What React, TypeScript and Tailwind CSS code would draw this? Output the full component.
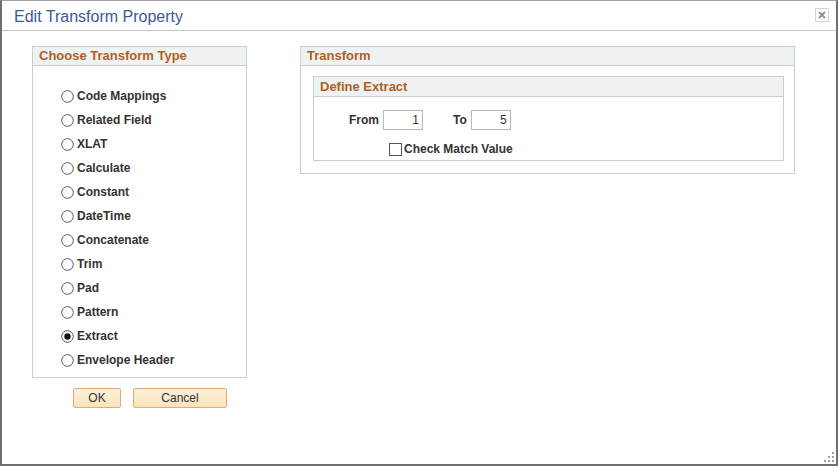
import {useState} from "react";

const types = [
  "Code Mappings",
  "Related Field",
  "XLAT",
  "Calculate",
  "Constant",
  "DateTime",
  "Concatenate",
  "Trim",
  "Pad",
  "Pattern",
  "Extract",
  "Envelope Header",
]

const Radio = ({checked}: {checked: boolean}) => {
  return (
    <svg width="13" height="13" viewBox="0 0 13 13" className="shrink-0">
      <circle cx="6.5" cy="6.5" r="5.8" fill="#fff" stroke="#555" strokeWidth="1"/>
      {checked && <circle cx="6.5" cy="6.5" r="3.2" fill="#111"/>}
    </svg>
  )
}

const App = () => {
  const [selected, setSelected] = useState("Extract")
  const [checked, setChecked] = useState(false)

  return (
    <div className="w-[838px] h-[466px] bg-white font-['Liberation_Sans',Arial,sans-serif]">
      <div className="relative w-full h-full border-l-2 border-r-2 border-b-2 border-t border-l-[#6f6f6f] border-r-[#6f6f6f] border-b-[#6f6f6f] border-t-[#a0a0a0] flex flex-col">
        {/* title bar */}
        <div className="h-[30px] shrink-0 flex items-center justify-between border-b border-[#c3c8cd] pl-[12px] pr-[7px]">
          <span className="text-[16px] text-[#3b5998] leading-none pt-[2px]">Edit Transform Property</span>
          <button className="w-[14px] h-[14px] border border-[#d4d4d4] flex items-center justify-center mb-[1px]">
            <svg width="8" height="8" viewBox="0 0 8 8">
              <path d="M1 1 L7 7 M7 1 L1 7" stroke="#8196a4" strokeWidth="2"/>
            </svg>
          </button>
        </div>

        <div className="flex flex-row pt-[15px] pl-[30px]">
          {/* left column */}
          <div className="flex flex-col w-[215px]">
            <div className="border border-[#c9ced3]">
              <div className="h-[19px] bg-[#eff2f3] border-b border-[#c9ced3] flex items-center pl-[6px]">
                <span className="text-[13px] font-bold text-[#b0601f]">Choose Transform Type</span>
              </div>
              <div className="flex flex-col pt-[18px] pb-[5px] pl-[28px]">
                {types.map((t) => (
                  <label key={t} className="h-[24px] flex items-center gap-[3px] cursor-pointer" onClick={() => setSelected(t)}>
                    <Radio checked={selected === t}/>
                    <span className="text-[12px] font-bold text-[#333]">{t}</span>
                  </label>
                ))}
              </div>
            </div>
            <div className="flex flex-row gap-[12px] mt-[10px] pl-[41px]">
              <button className="w-[48px] h-[20px] border border-[#e2a974] rounded-[2px] bg-gradient-to-b from-[#fdf1dc] to-[#fbe3b8] text-[12px] text-[#333] leading-none">OK</button>
              <button className="w-[94px] h-[20px] border border-[#e2a974] rounded-[2px] bg-gradient-to-b from-[#fdf1dc] to-[#fbe3b8] text-[12px] text-[#333] leading-none">Cancel</button>
            </div>
          </div>

          {/* right column */}
          <div className="ml-[53px] w-[495px] self-start border border-[#c9ced3]">
            <div className="h-[19px] bg-[#eff2f3] border-b border-[#c9ced3] flex items-center pl-[6px]">
              <span className="text-[13px] font-bold text-[#b0601f]">Transform</span>
            </div>
            <div className="pt-[10px] pb-[12px] pl-[12px] pr-[10px]">
              <div className="border border-[#c9ced3]">
                <div className="h-[20px] bg-[#eff2f3] border-b border-[#c9ced3] flex items-center pl-[6px]">
                  <span className="text-[13px] font-bold text-[#b0601f]">Define Extract</span>
                </div>
                <div className="flex flex-col pt-[13px] pb-[1px] pl-[35px]">
                  <div className="flex flex-row items-center h-[20px]">
                    <span className="text-[12px] font-bold text-[#333]">From</span>
                    <input readOnly value="1" className="ml-[4px] w-[40px] h-[20px] border border-[#b8b8b8] text-right pr-[3px] text-[12px] text-[#333] outline-none"/>
                    <span className="ml-[30px] text-[12px] font-bold text-[#333]">To</span>
                    <input readOnly value="5" className="ml-[4px] w-[40px] h-[20px] border border-[#b8b8b8] text-right pr-[3px] text-[12px] text-[#333] outline-none"/>
                  </div>
                  <label className="flex flex-row items-center h-[20px] mt-[9px] ml-[40px] cursor-pointer" onClick={() => setChecked(!checked)}>
                    <span className="w-[13px] h-[13px] border border-[#555] bg-white flex items-center justify-center">
                      {checked && <span className="text-[10px] leading-none">✓</span>}
                    </span>
                    <span className="ml-[2px] text-[12px] font-bold text-[#333]">Check Match Value</span>
                  </label>
                </div>
              </div>
            </div>
          </div>
        </div>

        {/* resize grip */}
        <svg width="10" height="10" viewBox="0 0 10 10" className="absolute right-[2px] bottom-[2px]">
          <rect x="8" y="0" width="2" height="2" fill="#a0a0a0"/>
          <rect x="4" y="4" width="2" height="2" fill="#a0a0a0"/>
          <rect x="8" y="4" width="2" height="2" fill="#a0a0a0"/>
          <rect x="0" y="8" width="2" height="2" fill="#a0a0a0"/>
          <rect x="4" y="8" width="2" height="2" fill="#a0a0a0"/>
          <rect x="8" y="8" width="2" height="2" fill="#a0a0a0"/>
        </svg>
      </div>
    </div>
  );
}

export default App
